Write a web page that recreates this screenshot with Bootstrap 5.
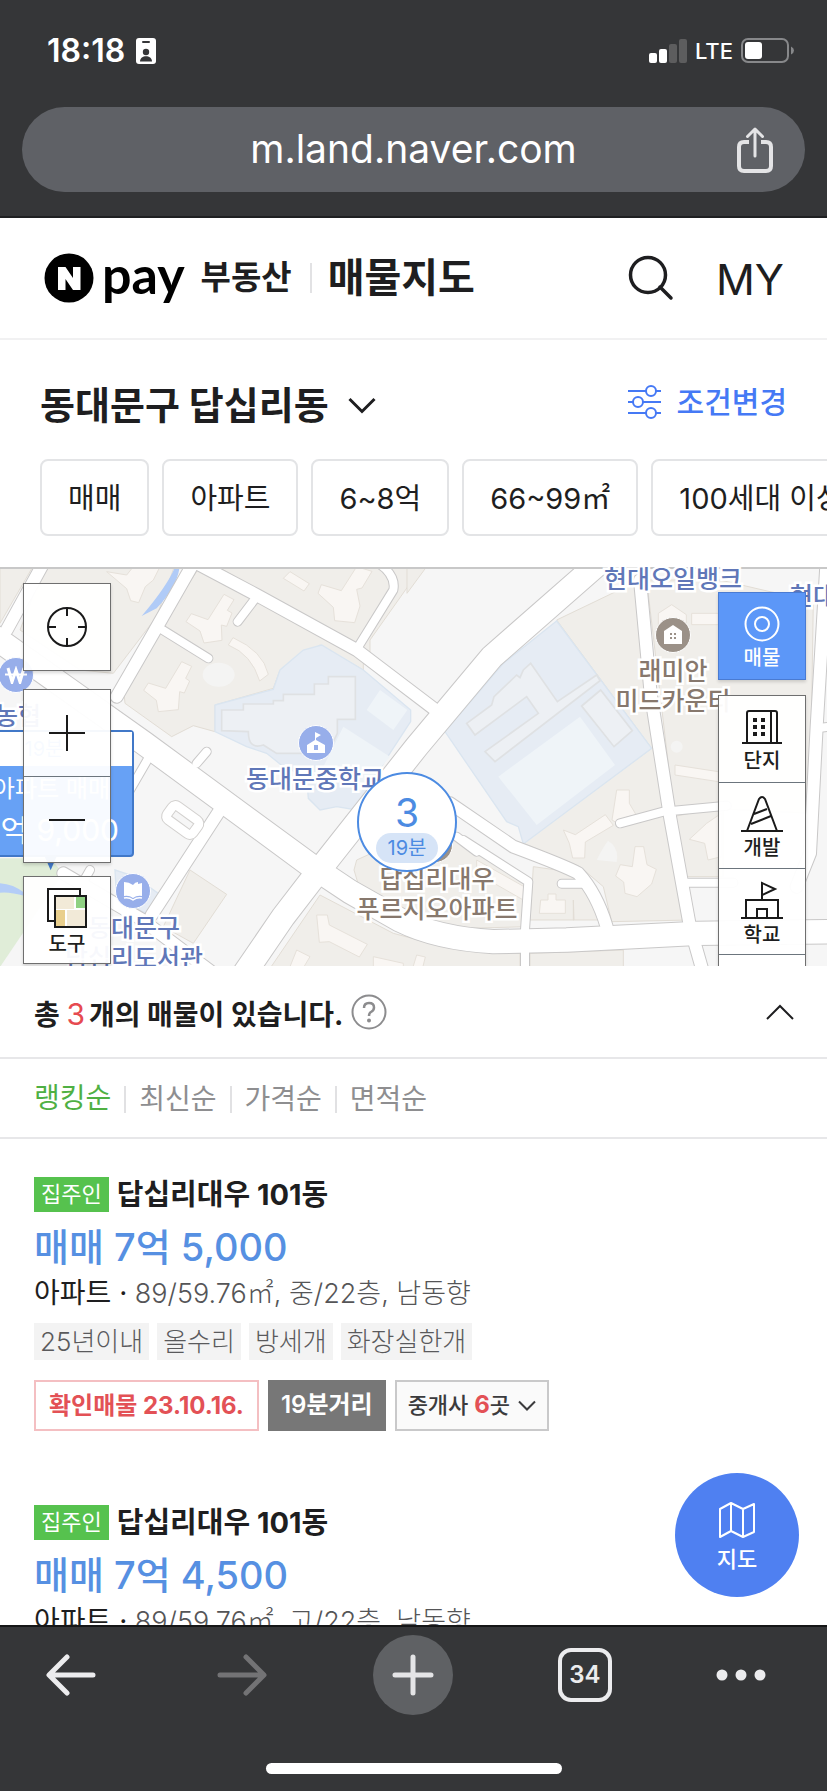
<!DOCTYPE html>
<html lang="ko">
<head>
<meta charset="utf-8">
<meta name="viewport" content="width=device-width, initial-scale=1">
<title>매물지도 - 부동산</title>
<link rel="stylesheet" href="https://cdn.jsdelivr.net/npm/bootstrap@5.3.0/dist/css/bootstrap.min.css">
<style>
  :root { --ink: #1e1e20; --rule: #e7e7e9; --chrome: #353638; }
  body { font-family: Inter, "Noto Sans CJK KR", sans-serif; color: var(--ink); line-height: 1.2; }
  button { font-family: inherit; color: inherit; line-height: inherit; font-weight: inherit; }
  a { color: inherit; text-decoration: none; }
  svg { display: block; flex: none; }
  .plain { background: none; border: 0; padding: 0; }

  .chrome-top, .chrome-bottom { background: var(--chrome); color: #fff; flex: none; }
  .chrome-top { height: 218px; border-bottom: 2px solid #1f2022; }
  .status { height: 102px; padding: 0 33px 0 47px; }
  .clock { font-size: 32px; font-weight: 600; }
  .clock-row { gap: 11px; }
  .lte { font-size: 22px; font-weight: 500; }
  .omnibox { height: 85px; margin: 5px 22px 0; border-radius: 43px; background: #5f6166; padding: 0 32px; }
  .omnibox .balance { width: 36px; }
  .address { font-size: 39px; }

  .site-head { height: 122px; border-bottom: 2px solid #f1f1f2; padding: 0 43px 0 44px; }
  .pay { font-family: Lato, sans-serif; font-size: 52px; font-weight: 700; color: #000; line-height: 48px; }
  .service { font-size: 33px; font-weight: 700; }
  .service-bar { width: 2px; height: 30px; margin: 0 16px 0 18px; background: #e2e2e4; }
  .page-name { font-size: 40px; font-weight: 700; }
  .my { font-size: 43px; margin-left: 42px; padding-top: 3px; }

  .place-row { height: 119px; padding: 12px 40px 0 40px; }
  .place { font-size: 38px; font-weight: 700; }
  .place svg { margin-left: 19px; }
  .cond { font-size: 30px; font-weight: 500; color: #4579f5; }
  .chips { padding: 0 0 31px 40px; gap: 13px; overflow: hidden; }
  .chip { flex: none; height: 77px; padding: 3px 26px 0; border: 2px solid #e3e4e6; border-radius: 8px; background: #fff; font-size: 29px; white-space: nowrap; }

  .map { height: 399px; overflow: hidden; background: #f6f6f6; }
  .map-art { width: 100%; height: 100%; }
  .place-name { position: absolute; transform: translate(-50%, -50%); font-size: 25px; font-weight: 500; line-height: 30px; text-align: center; white-space: nowrap; color: #6077b8; -webkit-text-stroke: 5px #fff; paint-order: stroke fill; }
  .place-name.apt { color: #87786d; }
  .pin { position: absolute; width: 36px; height: 36px; transform: translate(-50%, -50%); border-radius: 50%; border: 1px solid #fff; background: #97aeea; display: grid; place-items: center; }
  .pin.apt { background: #9b9188; }
  .ctl { position: absolute; width: 88px; border: 1px solid #6f6f6f; background: rgba(255,255,255,.95); box-shadow: 0 2px 3px rgba(0,0,0,.15); }
  .ctl button { display: block; width: 100%; height: 86px; padding-top: 4px; font-size: 20px; font-weight: 500; line-height: 24px; }
  .ctl .icon-only { padding-top: 0; }
  .ctl.on { background: #5c97f8; border-color: #4a7bd2; color: #fff; }
  .cluster { position: absolute; left: 357px; top: 205px; width: 100px; height: 100px; border-radius: 50%; border: 2px solid #4c8be2; background: #fff; color: #4c8be2; padding: 18px 0 0; }
  .cluster b { font-size: 39px; line-height: 41px; font-weight: 400; }
  .cluster span { width: 62px; height: 30px; border-radius: 15px; background: #d6e4f7; font-size: 20px; line-height: 31px; }
  .deal { position: absolute; left: -70px; top: 163px; width: 204px; height: 127px; border: 2px solid #4178c8; border-radius: 4px; background: #67a1f5; color: #fff; }
  .deal .far { height: 34px; background: #fff; color: #67a1f5; font-size: 20px; line-height: 34px; text-align: center; padding-left: 24px; }
  .deal .kind { font-size: 24px; line-height: 46px; text-align: right; padding-right: 22px; }
  .deal .cost { font-size: 30px; line-height: 36px; text-align: right; padding-right: 13px; }

  .count-row { height: 93px; border-bottom: 2px solid var(--rule); padding: 0 33px 0 34px; font-size: 28px; font-weight: 700; }
  .count-row .n { color: #e64a50; font-size: 30px; font-weight: 400; }
  .count-row .total { padding-top: 6px; }
  .sorts { height: 80px; border-bottom: 2px solid var(--rule); padding: 2px 0 0 34px; font-size: 28px; color: #8e8e90; }
  .sorts button + button { border-left: 2px solid #e1e1e3; margin-left: 13px; padding-left: 13px; line-height: 27px; }
  .sorts .active { color: #4fb043; }

  .deal-item { padding: 36px 34px 0; height: 328px; }
  .owner { background: #56c24e; color: #fff; font-size: 22px; line-height: 35px; padding: 0 7px; }
  .deal-item h2 { font-size: 29px; font-weight: 700; line-height: 36px; margin: 2px 0 0; }
  .price { font-size: 38px; font-weight: 500; line-height: 54px; color: #5690e2; margin-top: 7px; }
  .meta { font-size: 27px; line-height: 38px; color: #555557; font-weight: 300; white-space: nowrap; }
  .meta b { font-size: 28px; font-weight: 400; color: var(--ink); }
  .tags { gap: 8px; margin-top: 10px; }
  .tags span { background: #f3f3f3; color: #5a5a5c; font-size: 26px; line-height: 38px; height: 37px; padding: 0 6px; font-weight: 300; }
  .facts { gap: 9px; margin-top: 20px; font-size: 24px; font-weight: 600; }
  .facts > * { height: 51px; padding: 0 11px; border: 2px solid; }
  .facts .checked { border-color: #f4bfc2; color: #e35156; font-weight: 700; padding: 2px 13px 0; }
  .walk { border-color: #777; background: #777; color: #fff; }
  .agents { border-color: #c9c9ca; background: #fafafa; color: #3b3b3d; font-size: 22px; font-weight: 500; }
  .agents em { font-style: normal; font-size: 24px; font-weight: 700; color: #e35156; }
  .fab { position: absolute; right: 28px; bottom: 28px; width: 124px; height: 124px; border-radius: 50%; background: #4f80f1; color: #fff; font-size: 22px; font-weight: 500; padding-top: 4px; }

  .chrome-bottom { height: 166px; border-top: 2px solid #151617; }
  .tools { height: 96px; margin: 0 -15px; display: grid; grid-template-columns: repeat(5, 1fr); place-items: center; }
  .tools .more { padding-right: 30px; }
  .new-tab { width: 80px; height: 80px; border-radius: 50%; background: #5f6164; }
  .tabs-open { width: 54px; height: 54px; border: 4px solid #ececee; border-radius: 13px; font-size: 24px; font-weight: 600; color: #ececee; }
  .home-bar { width: 296px; height: 11px; border-radius: 6px; background: #fff; margin: 40px auto 0; }
</style>
</head>
<body class="d-flex flex-column vh-100 overflow-hidden bg-white">

<header class="chrome-top">
  <div class="status d-flex align-items-center justify-content-between">
    <div class="clock-row d-flex align-items-center">
      <span class="clock">18:18</span>
      <svg width="20" height="26" viewBox="0 0 20 26"><rect width="20" height="26" rx="3" fill="#fff"/><rect x="6" y="3" width="8" height="2" rx="1" fill="#353638"/><circle cx="10" cy="14" r="3.2" fill="#353638"/><path d="M4 23.500c0-7 12-7 12 0z" fill="#353638"/></svg>
    </div>
    <div class="d-flex align-items-center gap-2">
      <svg width="38" height="24" viewBox="0 0 38 24"><rect y="14" width="8" height="10" rx="2" fill="#fff"/><rect x="10" y="10" width="8" height="14" rx="2" fill="#fff"/><rect x="20" y="5" width="8" height="19" rx="2" fill="#5d5d5e"/><rect x="30" width="8" height="24" rx="2" fill="#5d5d5e"/></svg>
      <span class="lte">LTE</span>
      <svg width="53" height="25" viewBox="0 0 53 25"><rect x="1" y="1" width="46" height="23" rx="6" fill="none" stroke="#87888a" stroke-width="2"/><rect x="4" y="4" width="17" height="17" rx="3" fill="#fff"/><path d="M50 8.500q3 1.500 3 4t-3 4z" fill="#87888a"/></svg>
    </div>
  </div>
  <div class="omnibox d-flex align-items-center justify-content-between">
    <span class="balance"></span>
    <a href="#" class="address">m.land.naver.com</a>
    <button class="plain" aria-label="공유"><svg width="36" height="46" viewBox="0 0 36 46" fill="none" stroke="#e4e4e6" stroke-width="4"><path d="M12 15H7q-5 0-5 5v19q0 5 5 5h22q5 0 5-5V20q0-5-5-5h-5"/><path d="M18 29V3M10.500 9.500L18 2l7.500 7.500" stroke-linecap="round" stroke-linejoin="round" stroke-width="3"/></svg></button>
  </div>
</header>

<main class="flex-grow-1 position-relative overflow-hidden">
  <div class="site-head d-flex align-items-center justify-content-between">
    <div class="d-flex align-items-center">
      <svg class="me-2" width="50" height="50" viewBox="0 0 50 50"><circle cx="25" cy="25" r="24.500" fill="#000"/><path d="M14 14h7.500l7.500 11V14h7.500v23H29l-7.500-11v11H14z" fill="#fff"/></svg>
      <a href="#" class="pay pb-2">pay</a>
      <a href="#" class="service ms-3">부동산</a>
      <span class="service-bar"></span>
      <h1 class="page-name m-0">매물지도</h1>
    </div>
    <div class="d-flex align-items-center">
      <button class="plain" aria-label="검색"><svg width="46" height="46" viewBox="0 0 46 46" fill="none" stroke="#1e1e20" stroke-width="3.500" stroke-linecap="round"><circle cx="20" cy="20" r="17.500"/><path d="M32 32l11 11"/></svg></button>
      <a href="#" class="my">MY</a>
    </div>
  </div>

  <div class="place-row d-flex align-items-center justify-content-between">
    <button class="plain place d-flex align-items-center">동대문구 답십리동
      <svg width="28" height="17" viewBox="0 0 28 17" fill="none" stroke="#1e1e20" stroke-width="3"><path d="M1.500 2L14 14.500 26.500 2"/></svg></button>
    <button class="plain cond d-flex align-items-center pb-2"><svg class="me-3" width="33" height="34" viewBox="0 0 33 34" fill="#fff" stroke="#4579f5" stroke-width="2"><path d="M0 6h33M0 17h33M0 28h33"/><circle cx="23" cy="6" r="5"/><circle cx="10" cy="17" r="5"/><circle cx="23" cy="28" r="5"/></svg>조건변경</button>
  </div>
  <div class="chips d-flex">
    <button class="chip">매매</button>
    <button class="chip">아파트</button>
    <button class="chip">6~8억</button>
    <button class="chip">66~99㎡</button>
    <button class="chip">100세대 이상</button>
  </div>

  <section class="map position-relative" aria-label="지도">
    <svg class="map-art" viewBox="0 21 2481 1200" preserveAspectRatio="xMinYMin slice">
      <rect y="21" width="2481" height="1200" fill="#f6f6f6"/>
      <g fill="#f0eeea" stroke="#e2ddd5" stroke-width="3">
        <path d="M0 0H110L0 190zM140 0H530L470 170 340 340 240 330 60 210z"/>
        <path d="M640 30L1090 290 1090 330 960 255 840 330 820 385 645 435 645 515 580 497 515 530 375 430 370 380 480 200 600 20zM620 0H1280L1110 240V290z"/>
        <path d="M570 930L680 1003 580 1150 490 1100zM1070 900L1180 850 1360 820 1590 960 1580 1100 1400 1105 1200 1070 1080 990 1062 930z"/>
        <path d="M960 1005L1180 1120 1330 1160 1560 1180V1240H800zM1590 1180L1870 1170V1240H1590z"/>
        <path d="M1670 180L1920 60 1990 740 2070 1080 1835 1085 1810 980 1740 920 1570 850 1955 565z"/>
        <path d="M1940 60L2160 60 2310 95 2440 120 2430 760 2020 740zM2020 770L2170 740 2170 950 2050 950zM1600 920L1740 940 1800 1040 1820 1080H1720L1720 1020 1722 1080H1590z"/>
        <path d="M1221 100L1280 20H1221z"/>
      </g>
      <path d="M0 895H150L190 940 0 1221z" fill="#e0edd8"/>
      <path d="M0 970Q40 972 75 1000V1008Q30 995 0 998z" fill="#b4cdf7"/>
      <path d="M524 24L538 26Q530 80 470 145L425 168Q500 80 524 24z" fill="#b0cbf7"/>
      <g fill="#e6ecf4" stroke="#dae5f0" stroke-width="4">
        <path d="M645 435L820 388 840 330 910 270 965 255 1090 330 1232 450 1232 485 1150 610 1070 750 1010 740 960 750 925 715 920 650 850 620 800 580 740 560 645 515z"/>
        <path d="M1670 183L1955 565 1570 852 1555 800 1520 785 1335 515 1510 310z"/>
        <path d="M345 930l60 20 70 50-35 60-90-40z"/>
      </g>
      <g fill="#edf0f4" stroke="#dfe1e3" stroke-width="5">
        <path d="M665 450H730V432H820V422H850V403H943V372H985V350H1066V478H1012V520L1000 545 940 580H830L790 555Q745 570 745 515L665 512z"/>
        <path d="M1400 490L1475 435 1482 410 1550 345 1560 353 1570 330 1592 310 1672 425 1790 345 1800 362 1485 605 1455 575 1615 460 1580 410 1425 525z"/>
        <path d="M1745 438l57-48 95 122-55 48z"/>
      </g>
      <g fill="#eff4f8"><path d="M1030 500L1170 590 1110 660 1080 700 970 620zM1140 390L1222 450 1180 510 1100 450zM1740 470L1845 615 1610 795 1495 650z"/></g>
      <g fill="#f9f6f3" stroke="#e6e1da" stroke-width="3">
        <path d="M672 103l30 16-20 32 14 8-16 40-16-4 2 46-54 8-12-36-42-28 16-24 50 18z"/>
        <path d="M545 305l30 14-18 36 12 8-16 36-14-4-4 54-60 6-6-34-38-30 14-22 52 16z"/>
        <path d="M1070 20l46 14-30 50-16 4 10 50-16 50-60-6-4-40-46-42 10-26 60 18z"/>
        <path d="M320 35l60 10 20-25h80l-20 40-24 20-20 48-24-6-12-36z"/>
        <path d="M685 255l14-22q90 40 106 110l-26 20q-24-80-94-108zM870 35l58 36-16 22-62-38z"/>
        <path d="M950 1065h32l6 30 114 58-24 38-90-46-30 2z"/>
        <path d="M1850 690h38v40l20 34-30 8-18 22-24-14zM1690 810l36 14 90-60 24 32-84 50-2 48h-36l-10-44zM1905 860h26l10 54 28 14-14 44-44 38-36-10-4-34-24-18 14-34 36 6zM1622 1020h22v-18h24v18h28v40h-78zM2025 615l130 20v30l-130-20zM1975 160l40-26 44 30v34h-84zM2075 160h80v34h-80zM2120 790l44-30v130l-40 10-10-50-46-12zM1430 900l160 90-20 30-140-80z"/>
        <path d="M890 1170l40 20-24 40h-40zM1120 1190l90 20v20h-90zM1250 1185l26 6-10 40h-30z"/>
      </g>
      <g fill="#f4f4f3"><ellipse cx="656" cy="344" rx="48" ry="36"/><path d="M1790 900q20-40 34-58 34 20 26 64zM2012 560a18 18 0 1 0 36 0 18 18 0 1 0-36 0"/></g>
      <g fill="none" stroke-linecap="round" stroke-linejoin="round">
        <g stroke="#c9c8c8">
          <g stroke-width="76"><path d="M-40 215L200 385 430 548 930 915 1050 995 1200 1080Q1310 1135 1480 1145L1700 1140 2090 1120 2500 1115"/><path d="M720 1260L850 1070 950 940 1250 560 1476 290 1790 15"/></g>
          <g stroke-width="42"><path d="M600 15L770 105 1070 270 1300 445M580 10L460 220 350 410M130 10L20 210M1350 730L1540 860Q1700 920 1735 940 1790 1000 1820 1100M1920 60L1952 400 2010 770 2070 1100 2110 1240M2480 0L2450 500 2430 880 2390 980M190 940L420 1075 640 1240M660 750L455 1065"/></g>
          <g stroke-width="30"><path d="M770 110L713 185M480 205L625 295M1075 260L1180 90Q1190 40 1120 0M590 610L620 575M1390 840L1585 965 1575 1110V1230M1685 971H1750M1860 790L1990 755 2180 737M2060 968H2200M2450 505L2490 500M445 595L390 690M270 930L230 1000M1370 830L1430 875"/></g>
        </g>
        <g stroke="#fff">
          <g stroke-width="70"><path d="M-40 215L200 385 430 548 930 915 1050 995 1200 1080Q1310 1135 1480 1145L1700 1140 2090 1120 2500 1115"/><path d="M720 1260L850 1070 950 940 1250 560 1476 290 1790 15"/></g>
          <g stroke-width="36"><path d="M600 15L770 105 1070 270 1300 445M580 10L460 220 350 410M130 10L20 210M1350 730L1540 860Q1700 920 1735 940 1790 1000 1820 1100M1920 60L1952 400 2010 770 2070 1100 2110 1240M2480 0L2450 500 2430 880 2390 980M190 940L420 1075 640 1240M660 750L455 1065"/></g>
          <g stroke-width="24"><path d="M770 110L713 185M480 205L625 295M1075 260L1180 90Q1190 40 1120 0M590 610L620 575M1390 840L1585 965 1575 1110V1230M1685 971H1750M1860 790L1990 755 2180 737M2060 968H2200M2450 505L2490 500M445 595L390 690M270 930L230 1000M1370 830L1430 875"/></g>
        </g>
      </g>
      <g transform="rotate(36 548 780)" fill="none"><rect x="500" y="755" width="96" height="50" rx="12" stroke="#d2d0ce" stroke-width="32"/><rect x="500" y="755" width="96" height="50" rx="12" stroke="#fff" stroke-width="26"/></g>
      <path d="M0 24H2481" stroke="#c8c8c8" stroke-width="6"/>
      <path d="M132 885h40l-20 46z" fill="#4178c8"/>
    </svg>

    <span class="place-name" style="left:18px;top:149px">농협</span>
    <span class="place-name" style="left:315px;top:212px">동대문중학교</span>
    <span class="place-name" style="left:673px;top:12px">현대오일뱅크</span>
    <span class="place-name" style="left:836px;top:29px">현대오일</span>
    <span class="place-name apt" style="left:673px;top:119px">래미안<br>미드카운티</span>
    <span class="place-name" style="left:134px;top:376px">동대문구<br>답십리도서관</span>
    <span class="pin" style="left:16px;top:108px"><svg width="22" height="18" viewBox="0 0 22 18" fill="none" stroke="#fff"><path d="M3 2l4 14 4-12 4 12 4-14" stroke-width="3"/><path d="M0 8.500h22" stroke-width="2"/></svg></span>
    <span class="pin" style="left:316px;top:176px"><svg width="20" height="22" viewBox="0 0 20 22" fill="#fff"><path d="M9 0l6 3-5 3v2l9 5v8H1v-8l8-5z"/><path d="M8 13h4v5H8z" fill="#97aeea"/></svg></span>
    <span class="pin" style="left:133px;top:324px"><svg width="20" height="20" viewBox="0 0 20 20" fill="#fff"><path d="M1 1q5 0 9 3 2-3 5-3v2l4-1v13q-5-1-9 2-4-3-9-2z"/><path d="M1 17q5-1 9 2 4-3 9-2" fill="none" stroke="#fff" stroke-width="1.500"/></svg></span>
    <span class="pin apt" style="left:673px;top:68px"><svg width="20" height="20" viewBox="0 0 20 20" fill="#fff"><path d="M10 0l9 6v13H1V6z"/><path d="M7 8h2v2H7zM11 8h2v2h-2zM7 12h2v2H7zM11 12h2v2h-2z" fill="#9b9188"/></svg></span>
    <span class="pin apt" style="left:435px;top:278px"></span>
    <span class="place-name apt" style="left:437px;top:327px">답십리대우<br>푸르지오아파트</span>

    <div class="deal"><div class="far">19분</div><div class="kind">아파트 매매</div><div class="cost">7억 9,000</div></div>
    <button class="cluster d-flex flex-column align-items-center"><b>3</b><span>19분</span></button>

    <div class="ctl" style="left:23px;top:16px"><button class="plain icon-only" aria-label="현재 위치"><svg class="mx-auto" width="40" height="40" viewBox="0 0 40 40" fill="none" stroke="#1a1a1a" stroke-width="2"><circle cx="20" cy="20" r="19"/><path d="M20 1v8M20 31v8M1 20h8M31 20h8"/></svg></button></div>
    <div class="ctl" style="left:23px;top:122px">
      <button class="plain icon-only" aria-label="확대"><svg class="mx-auto" width="36" height="36" viewBox="0 0 36 36" stroke="#1a1a1a" stroke-width="2"><path d="M18 0v36M0 18h36"/></svg></button>
      <button class="plain icon-only border-top border-secondary" aria-label="축소"><svg class="mx-auto" width="36" height="36" viewBox="0 0 36 36" stroke="#1a1a1a" stroke-width="2"><path d="M0 18h36"/></svg></button>
    </div>
    <div class="ctl" style="left:23px;top:309px"><button class="plain"><svg class="mx-auto mb-1" width="40" height="40" viewBox="0 0 40 40"><rect x="1" y="1" width="32" height="32" fill="#fff" stroke="#1a1a1a" stroke-width="2"/><rect x="8" y="8" width="31" height="31" fill="#fff" stroke="#1a1a1a" stroke-width="2"/><path d="M9 9h18v12H9zM20 22h18v16H20z" fill="#f2ead8"/><path d="M29 9h9v11h-9z" fill="#8fd183"/><path d="M9 22h9v16H9z" fill="#e9cf8d"/></svg>도구</button></div>

    <div class="ctl on" style="right:21px;top:25px"><button class="plain"><svg class="mx-auto mb-1" width="36" height="36" viewBox="0 0 36 36" fill="none" stroke="#fff" stroke-width="2"><circle cx="18" cy="18" r="16.500"/><circle cx="18" cy="18" r="7"/></svg>매물</button></div>
    <div class="ctl" style="right:21px;top:128px">
      <button class="plain"><svg class="mx-auto mb-1" width="40" height="36" viewBox="0 0 40 36" fill="none" stroke="#1a1a1a" stroke-width="2"><path d="M0 34h40M5 34V4q0-2 2-2h26q2 0 2 2v30M29 2v32"/><path d="M11 9h4v4h-4zM19 9h4v4h-4zM11 16h4v4h-4zM19 16h4v4h-4zM11 23h4v4h-4zM19 23h4v4h-4z" fill="#1a1a1a" stroke="none"/></svg>단지</button>
      <button class="plain border-top border-secondary"><svg class="mx-auto mb-1" width="42" height="36" viewBox="0 0 42 36" fill="none" stroke="#1a1a1a" stroke-width="2"><path d="M0 35h42M6 35L18 3q3-4 6 0l12 32M13 18l13-5M10 28l20-8"/></svg>개발</button>
      <button class="plain border-top border-secondary"><svg class="mx-auto mb-1" width="42" height="38" viewBox="0 0 42 38" fill="none" stroke="#1a1a1a" stroke-width="2"><path d="M0 37h42M5 37V19h32v18M16 37v-9h10v9M21 19V2l13 6-13 6"/></svg>학교</button>
      <button class="plain border-top border-secondary" aria-label="더보기"></button>
    </div>
  </section>

  <div class="count-row d-flex align-items-center justify-content-between">
    <div class="d-flex align-items-center">
      <span class="total">총 <span class="n">3</span><span class="ms-1">개의 매물이 있습니다.</span></span>
      <button class="plain ms-2" aria-label="도움말"><svg width="36" height="36" viewBox="0 0 36 36" fill="none" stroke="#8c8c8e" stroke-width="2"><circle cx="18" cy="18" r="16.500"/><path d="M13 14q0-5 5-5t5 4.500q0 3-3 4.500-2 1-2 4" stroke-width="2.500"/><circle cx="18" cy="26.500" r="1" fill="#8c8c8e"/></svg></button>
    </div>
    <button class="plain" aria-label="접기"><svg width="28" height="16" viewBox="0 0 28 16" fill="none" stroke="#1e1e20" stroke-width="2"><path d="M1 15L14 2l13 13"/></svg></button>
  </div>

  <div class="sorts d-flex align-items-center">
    <button class="plain active">랭킹순</button><button class="plain sort">최신순</button><button class="plain sort">가격순</button><button class="plain sort">면적순</button>
  </div>

  <article class="deal-item">
    <div class="d-flex align-items-center gap-2"><span class="owner">집주인</span><h2>답십리대우 101동</h2></div>
    <div class="price">매매 7억 5,000</div>
    <div class="meta"><b>아파트 ·</b> 89/59.76㎡, 중/22층, 남동향</div>
    <div class="tags d-flex"><span>25년이내</span><span>올수리</span><span>방세개</span><span>화장실한개</span></div>
    <div class="facts d-flex">
      <span class="checked d-flex align-items-center">확인매물 23.10.16.</span>
      <span class="walk d-flex align-items-center">19분거리</span>
      <button class="agents d-flex align-items-center"><span>중개사 <em>6</em>곳</span><svg class="ms-2" width="18" height="12" viewBox="0 0 18 12" fill="none" stroke="#3b3b3d" stroke-width="2"><path d="M1 1.500l8 8 8-8"/></svg></button>
    </div>
  </article>
  <article class="deal-item">
    <div class="d-flex align-items-center gap-2"><span class="owner">집주인</span><h2>답십리대우 101동</h2></div>
    <div class="price">매매 7억 4,500</div>
    <div class="meta"><b>아파트 ·</b> 89/59.76㎡, 고/22층, 남동향</div>
  </article>

  <button class="plain fab d-flex flex-column align-items-center justify-content-center"><svg class="mb-2" width="36" height="36" viewBox="0 0 36 36" fill="none" stroke="#fff" stroke-width="2" stroke-linejoin="round"><path d="M1 7l11-6 12 6 11-5v28l-11 5-12-6-11 6zM12 1v28M24 7v28"/></svg>지도</button>
</main>

<footer class="chrome-bottom overflow-hidden">
  <nav class="tools">
    <button class="plain" aria-label="뒤로"><svg width="50" height="42" viewBox="0 0 50 42" fill="none" stroke="#ececee" stroke-width="5" stroke-linecap="round" stroke-linejoin="round"><path d="M47 21H4M21 3L3 21l18 18"/></svg></button>
    <button class="plain" aria-label="앞으로"><svg width="50" height="42" viewBox="0 0 50 42" fill="none" stroke="#737375" stroke-width="5" stroke-linecap="round" stroke-linejoin="round"><path d="M3 21h43M29 3l18 18-18 18"/></svg></button>
    <button class="plain new-tab" aria-label="새 탭"><svg class="mx-auto" width="42" height="42" viewBox="0 0 42 42" stroke="#e4e4e6" stroke-width="5" stroke-linecap="round"><path d="M21 3v36M3 21h36"/></svg></button>
    <button class="plain tabs-open" aria-label="열린 탭">34</button>
    <button class="plain more" aria-label="메뉴"><svg width="62" height="12" viewBox="0 0 62 12" fill="#ececee"><circle cx="12" cy="6" r="5.500"/><circle cx="31" cy="6" r="5.500"/><circle cx="50" cy="6" r="5.500"/></svg></button>
  </nav>
  <div class="home-bar"></div>
</footer>
<script src="https://cdn.jsdelivr.net/npm/bootstrap@5.3.0/dist/js/bootstrap.bundle.min.js"></script>
</body>
</html>
